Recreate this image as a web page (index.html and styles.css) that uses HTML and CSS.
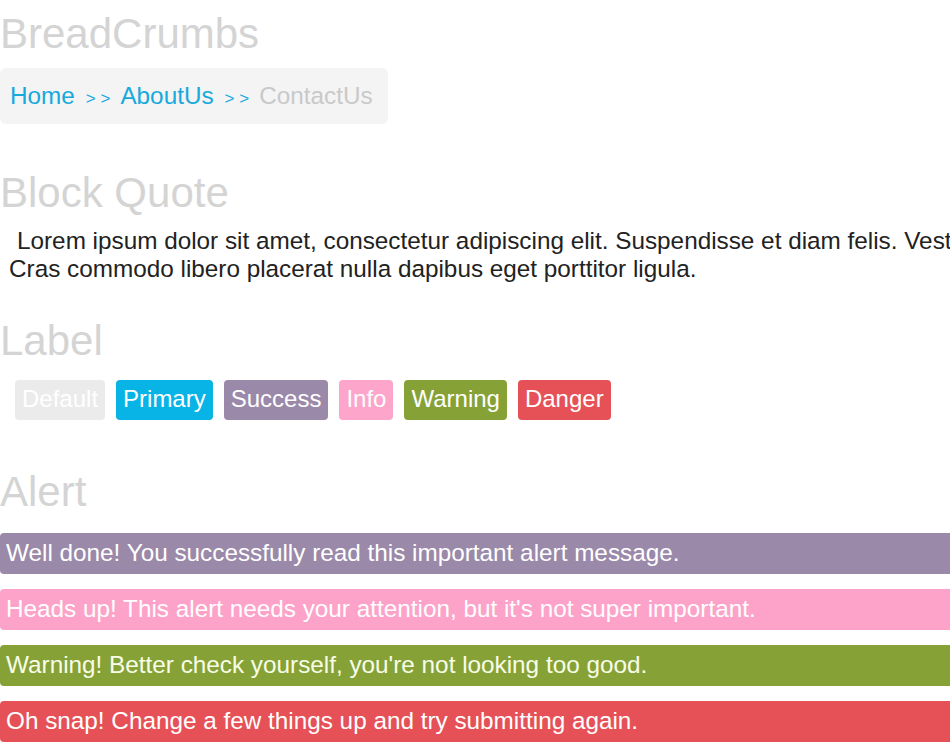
FILE: index.html
```html
<!DOCTYPE html>
<html lang="en">
<head>
<meta charset="utf-8">
<title>UI Elements</title>
<link rel="stylesheet" href="styles.css">
</head>
<body>
<div class="page">
  <h2 class="title">BreadCrumbs</h2>
  <nav class="breadcrumb">
    <a class="crumb" href="#">Home</a><span class="sep">&gt; &gt;</span><a class="crumb" href="#">AboutUs</a><span class="sep">&gt; &gt;</span><span class="crumb current">ContactUs</span>
  </nav>

  <h2 class="title">Block Quote</h2>
  <blockquote class="quote">Lorem ipsum dolor sit amet, consectetur adipiscing elit. Suspendisse et diam felis. Vestibulum ante ipsum primis in faucibus.<br>Cras commodo libero placerat nulla dapibus eget porttitor ligula.</blockquote>

  <h2 class="title">Label</h2>
  <div class="labels">
    <span class="label label-default">Default</span>
    <span class="label label-primary">Primary</span>
    <span class="label label-success">Success</span>
    <span class="label label-info">Info</span>
    <span class="label label-warning">Warning</span>
    <span class="label label-danger">Danger</span>
  </div>

  <h2 class="title">Alert</h2>
  <div class="alerts">
    <div class="alert alert-success">Well done! You successfully read this important alert message.</div>
    <div class="alert alert-info">Heads up! This alert needs your attention, but it's not super important.</div>
    <div class="alert alert-warning">Warning! Better check yourself, you're not looking too good.</div>
    <div class="alert alert-danger">Oh snap! Change a few things up and try submitting again.</div>
  </div>
</div>
</body>
</html>
```

FILE: styles.css
```css
html {
  overflow: hidden;
}

body {
  margin: 0;
  background: #ffffff;
  font-family: "Liberation Sans", Arial, sans-serif;
  font-size: 24.3px;
  line-height: 28px;
  color: #333333;
}

.page {
  width: 1400px;
  padding-top: 10px;
}

.title {
  margin: 0;
  font-size: 42px;
  line-height: 48px;
  font-weight: normal;
  color: #d4d4d4;
}

.breadcrumb {
  display: flex;
  align-items: baseline;
  width: max-content;
  height: 28px;
  margin: 10px 0 45px;
  padding: 14px 15px 14px 10px;
  background: #f4f4f4;
  border-radius: 6px;
}

.crumb {
  color: #17a9dc;
  text-decoration: none;
}

.crumb.current {
  color: #c9c9c9;
}

.sep {
  font-size: 17px;
  line-height: 20px;
  color: #17a9dc;
  padding: 0 10px 0 11px;
  white-space: pre;
}

.quote {
  margin: 10px 0 34px;
  padding: 0 0 0 9px;
  text-indent: 8px;
  white-space: nowrap;
  color: #222222;
}

.labels {
  display: flex;
  gap: 11px;
  margin: 15px 0 48px;
  padding-left: 15px;
  font-size: 24px;
}

.label {
  display: inline-block;
  padding: 5px 7px 7px;
  border-radius: 4px;
  color: #ffffff;
}

.label-default { background: #ebebeb; }
.label-primary { background: #08b3e6; }
.label-success { background: #9b89a9; }
.label-info    { background: #fda5cb; }
.label-warning { background: #86a237; }
.label-danger  { background: #e65157; }

.alerts {
  margin-top: 17px;
  display: flex;
  flex-direction: column;
  gap: 15px;
}

.alert {
  padding: 6px 6px 7px;
  border-radius: 4px;
  color: #ffffff;
}

.alert-success { background: #9a89a8; }
.alert-info    { background: #fda3c9; }
.alert-warning { background: #86a237; color: #f8fde8; }
.alert-danger  { background: #e65157; }
```
